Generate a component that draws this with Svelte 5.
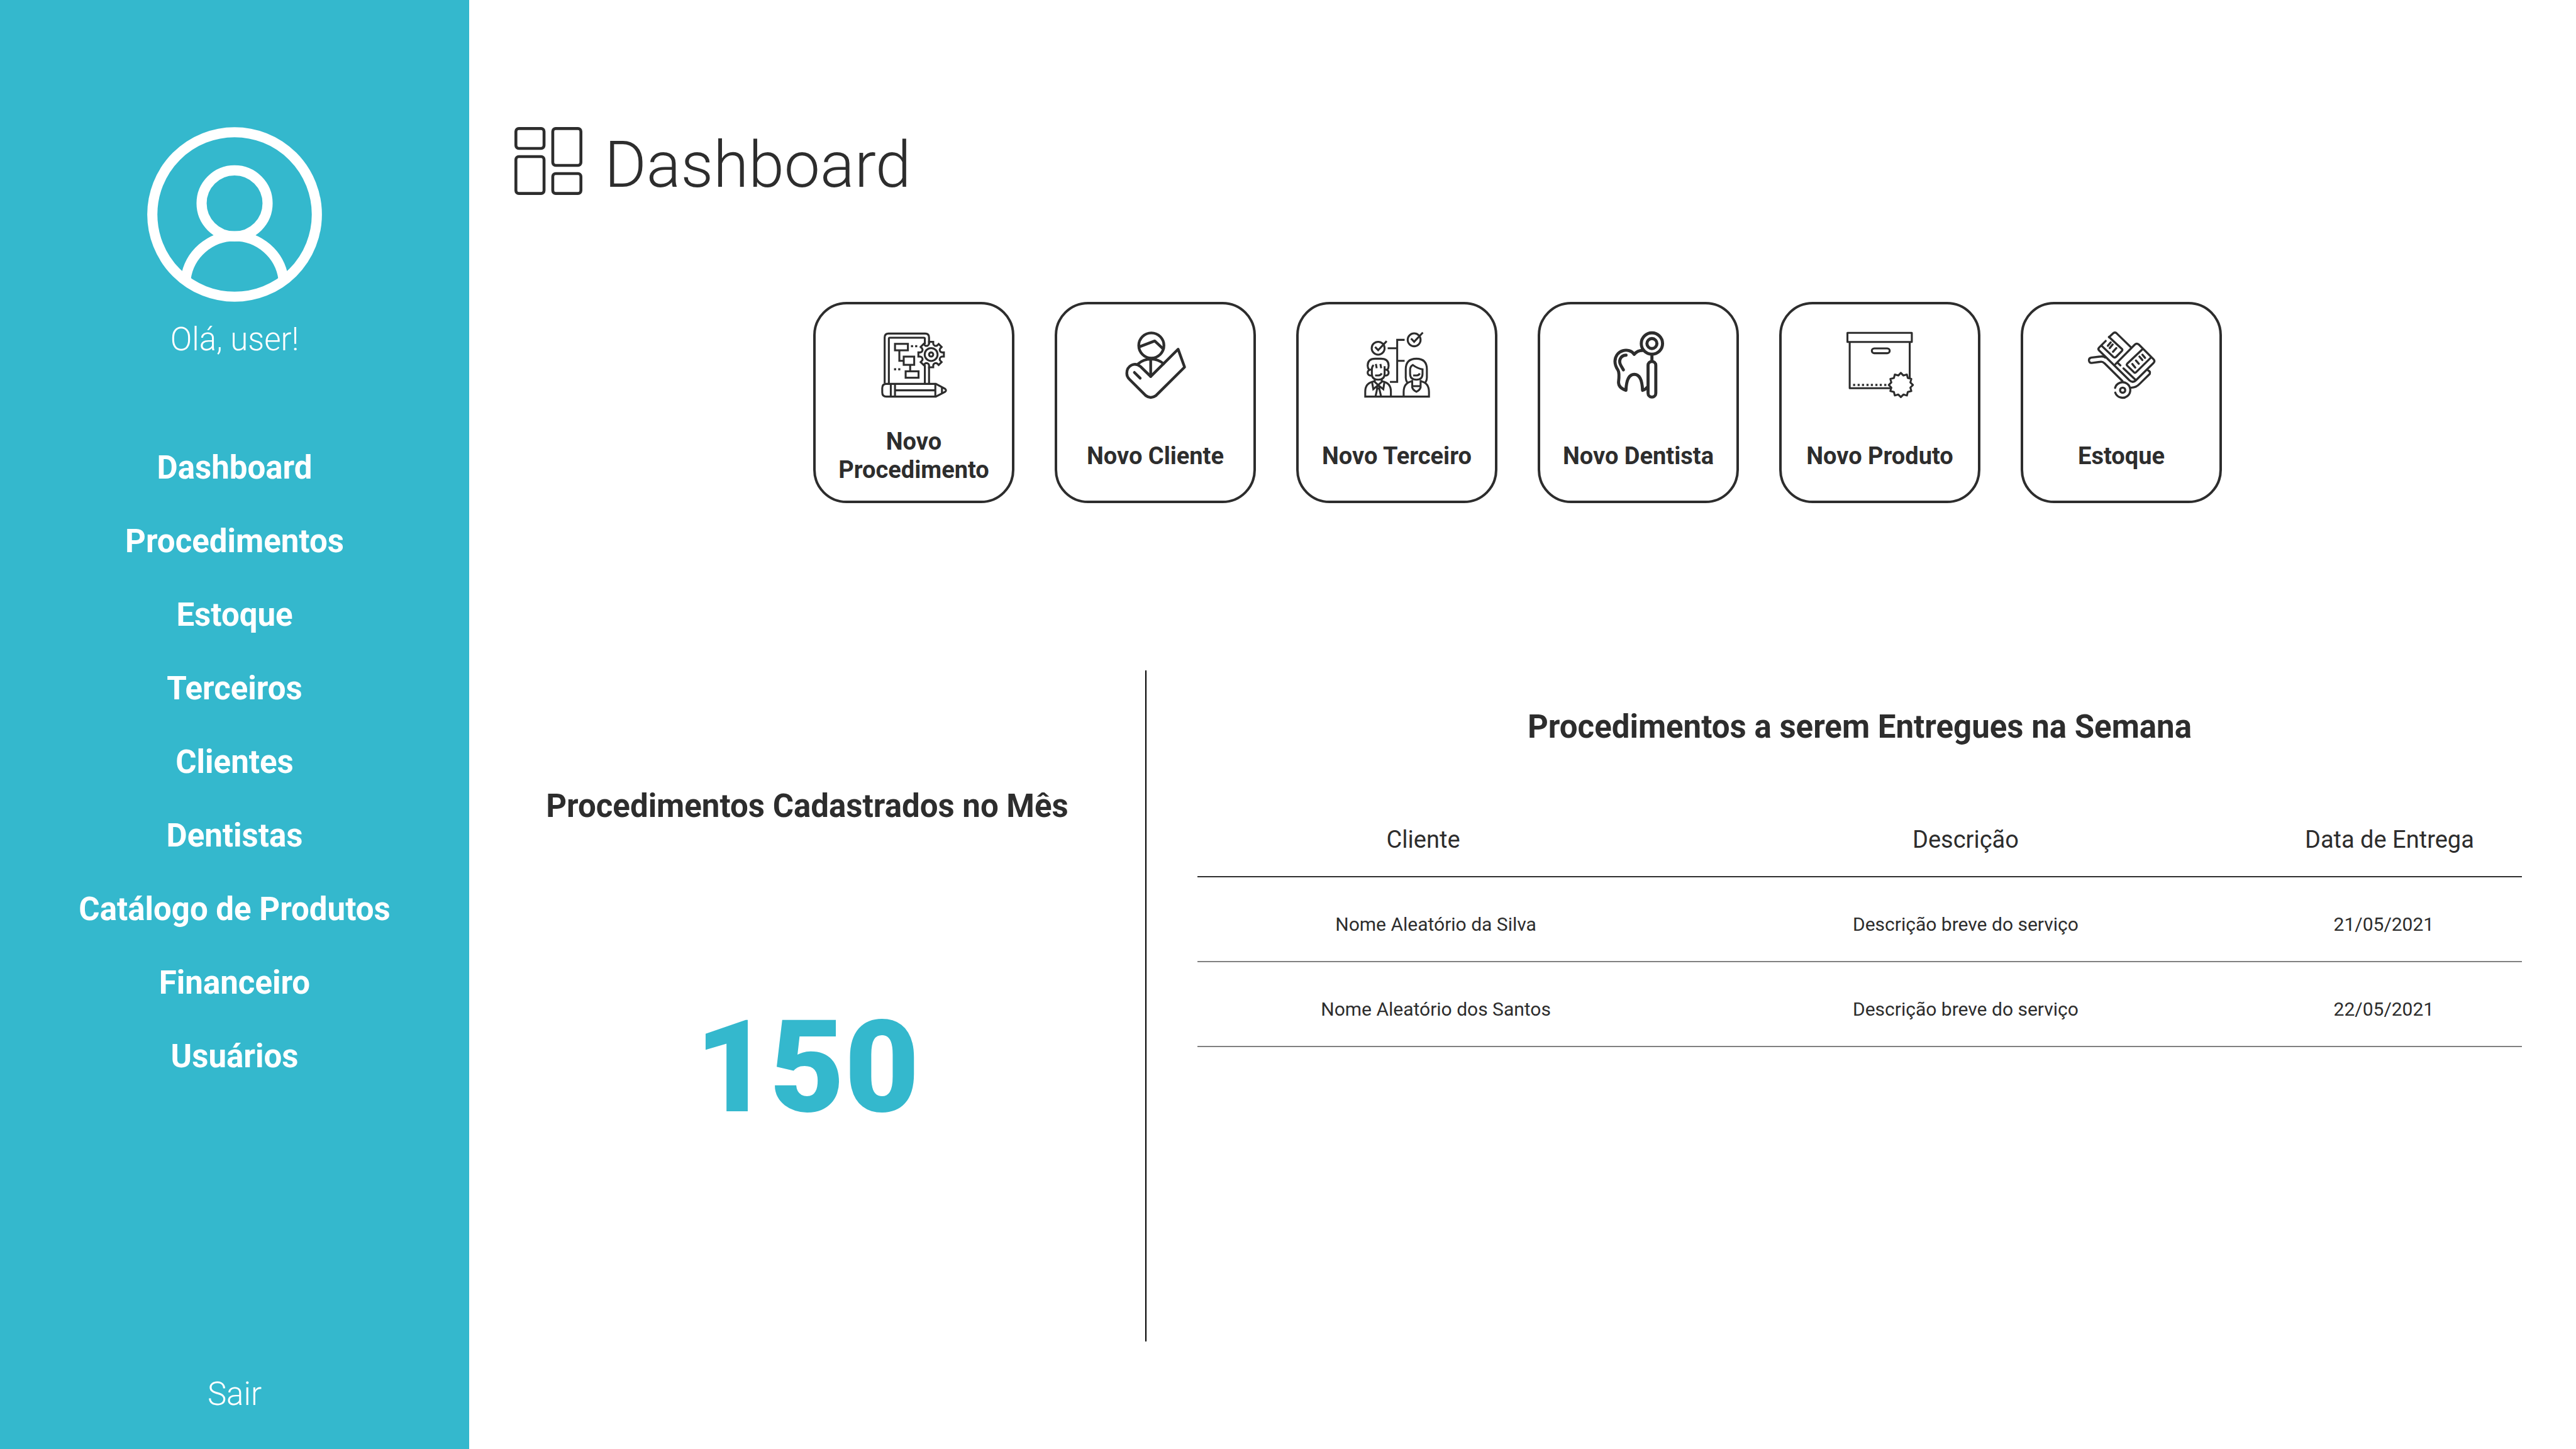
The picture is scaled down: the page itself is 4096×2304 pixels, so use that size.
<script>
  const menu = [
    'Dashboard',
    'Procedimentos',
    'Estoque',
    'Terceiros',
    'Clientes',
    'Dentistas',
    'Catálogo de Produtos',
    'Financeiro',
    'Usuários'
  ];

  const actions = [
    { icon: 'procedure', label: 'Novo Procedimento' },
    { icon: 'client', label: 'Novo Cliente' },
    { icon: 'partner', label: 'Novo Terceiro' },
    { icon: 'dentist', label: 'Novo Dentista' },
    { icon: 'product', label: 'Novo Produto' },
    { icon: 'stock', label: 'Estoque' }
  ];

  const deliveries = [
    { client: 'Nome Aleatório da Silva', description: 'Descrição breve do serviço', date: '21/05/2021' },
    { client: 'Nome Aleatório dos Santos', description: 'Descrição breve do serviço', date: '22/05/2021' }
  ];

  const monthlyTotal = 150;

  // Point (x, y) turned by the given angle around (cx, cy).
  function turn(cx, cy, x, y, degrees) {
    const a = (degrees * Math.PI) / 180;
    const px = cx + x * Math.cos(a) - y * Math.sin(a);
    const py = cy + x * Math.sin(a) + y * Math.cos(a);
    return `${px.toFixed(1)} ${py.toFixed(1)}`;
  }

  function gearPath(cx, cy) {
    let d = '';
    for (let i = 0; i < 8; i++) {
      const a = i * 45;
      const start = turn(cx, cy, -13, -66, a);
      d += i === 0 ? `M${start}` : `A16 16 0 0 0 ${start}`;
      d += `L${turn(cx, cy, -13, -79, a)}L${turn(cx, cy, 13, -79, a)}L${turn(cx, cy, 13, -66, a)}`;
    }
    return `${d}A16 16 0 0 0 ${turn(cx, cy, -13, -66, 0)}Z`;
  }

  function sealPath(cx, cy, outer, inner) {
    const points = [];
    for (let i = 0; i < 24; i++) {
      points.push(turn(cx, cy, 0, i % 2 ? -inner : -outer, i * 15));
    }
    return `M${points.join('L')}Z`;
  }

  const gear = gearPath(771, 371);
  const seal = sealPath(764, 560, 75, 61);
  const stitches = [468, 496, 523, 551, 578, 606, 633, 661];
</script>

<div class="page">
  <aside class="sidebar">
    <svg class="avatar" viewBox="75 69 1086 1086" aria-hidden="true">
      <circle cx="618" cy="612" r="511" />
      <circle cx="618" cy="543" r="205" />
      <path d="M315 1010A306 306 0 0 1 921 1010" />
    </svg>
    <p class="greeting">Olá, user!</p>
    <nav class="menu">
      {#each menu as item}
        <a href="#{item}">{item}</a>
      {/each}
    </nav>
    <a class="logout" href="#sair">Sair</a>
  </aside>

  <main class="main">
    <header class="heading">
      <svg class="heading-icon" viewBox="0 0 140 140" aria-hidden="true">
        <rect x="3" y="3" width="58" height="41" rx="6" />
        <rect x="79" y="3" width="58" height="76" rx="6" />
        <rect x="3" y="61" width="58" height="76" rx="6" />
        <rect x="79" y="96" width="58" height="41" rx="6" />
      </svg>
      <h1>Dashboard</h1>
    </header>

    <div class="actions">
      {#each actions as action}
        <button class="card" type="button">
          {#if action.icon === 'procedure'}
            <svg class="icon" viewBox="457 228 417 417" stroke-width="12" aria-hidden="true">
              <path d="M483 549V265Q483 241 507 241H734Q758 241 758 265V297M758 448V549" />
              <path d="M509 549V273Q509 267 515 267H726Q732 267 732 273V306M732 436V549" />
              <rect x="547" y="305" width="80" height="40" />
              <rect x="601" y="384" width="65" height="51" />
              <rect x="613" y="475" width="80" height="40" />
              <path d="M574 349V410H600M641 438V474" />
              <g class="solid">
                <rect x="646" y="313" width="13" height="13" />
                <rect x="672" y="313" width="13" height="13" />
                <rect x="541" y="456" width="13" height="13" />
                <rect x="567" y="456" width="13" height="13" />
              </g>
              <path class="paper" d={gear} />
              <path d="M732 306V300M758 297V306" />
              <circle cx="771" cy="371" r="40" />
              <circle cx="771" cy="371" r="13" />
              <path d="M494 553H800L858 584Q868 593 858 602L800 632H494Q468 632 468 606V579Q468 553 494 553Z" />
              <path d="M521 553V632M547 553V632M797 553V632M838 574V612M547 593H797" />
            </svg>
          {:else if action.icon === 'client'}
            <svg class="icon round" viewBox="427 228 417 417" stroke-width="17" aria-hidden="true">
              <circle cx="609" cy="315" r="78" />
              <path d="M538 322L630 287L682 336" />
              <path d="M528 428Q562 399 607 399Q650 399 685 428M605 399V507" />
              <path d="M605 507L542 446C505 414 457 440 457 488Q457 508 472 523L575 626Q605 648 637 626L815 449L775 338Z" />
              <path d="M504 482L540 518" />
            </svg>
          {:else if action.icon === 'partner'}
            <svg class="icon" viewBox="427 228 417 417" stroke-width="12" aria-hidden="true">
              <circle cx="518" cy="332" r="40" />
              <circle cx="741" cy="280" r="40" />
              <path d="M499 324L518 344L571 288M722 272L741 292L795 235" />
              <path d="M682 280H636V541H591M577 332H636M636 410H682" />
              <path d="M462 465Q453 455 453 440Q453 397 500 397H535Q583 397 583 440Q583 455 575 465" />
              <path d="M479 464Q453 465 453 484Q453 502 479 502M558 464Q583 465 583 484Q583 502 558 502" />
              <path d="M490 436Q479 445 479 465V490Q479 527 518 527Q558 527 558 490V443" />
              <path d="M504 430L509 456M532 430L537 456M499 501H520Q535 500 540 488" />
              <path d="M497 525V541L518 560L540 541V525" />
              <path d="M480 541L488 586L518 560L550 586L557 541" />
              <circle cx="518" cy="574" r="8" />
              <path d="M512 582L502 630M525 582L536 630" />
              <path d="M494 537Q438 547 438 600V632H833V603Q833 547 783 537M543 537Q597 547 597 600V632" />
              <path d="M676 632V603Q676 547 727 537" />
              <path d="M699 546Q689 530 689 515V463Q689 397 755 397Q820 397 820 463V515Q820 530 810 546" />
              <path d="M733 436Q716 445 716 465V490Q716 527 755 527Q793 527 793 490V463Q762 458 733 436Z" />
              <path d="M735 501H757Q770 500 776 488" />
              <path d="M729 529V575Q734 592 755 602Q776 592 781 575V529M729 567H781" />
            </svg>
          {:else if action.icon === 'dentist'}
            <svg class="icon round" viewBox="427 228 417 417" stroke-width="19" aria-hidden="true">
              <circle cx="718" cy="303" r="66" />
              <circle cx="718" cy="303" r="31" />
              <path d="M718 372V412" />
              <rect x="694" y="414" width="48" height="221" rx="24" />
              <path d="M690 573Q678 588 660 593Q656 494 609 494Q561 494 557 593Q511 578 511 543C515 510 517 484 508 468C494 448 489 432 489 413C492 340 578 325 608 370Q629 345 660 346" />
              <path d="M558 375C520 376 510 412 526 440L541 466" />
            </svg>
          {:else if action.icon === 'product'}
            <svg class="icon round" viewBox="427 228 417 417" stroke-width="12" aria-hidden="true">
              <rect x="433" y="237" width="399" height="56" />
              <path d="M447 296V580H764M819 296V560" />
              <rect x="584" y="333" width="111" height="30" rx="15" />
              <g class="solid">
                {#each stitches as x}
                  <rect {x} y="553" width="13" height="13" />
                {/each}
              </g>
              <path class="paper" d={seal} />
            </svg>
          {:else}
            <svg class="icon round" viewBox="427 228 417 417" stroke-width="13" aria-hidden="true">
              <path d="M557 264L584 239Q594 231 604 239L694 327" />
              <path d="M557 262L637 336Q643 342 637 349L602 385Q593 394 584 386L513 318" />
              <path d="M537 287L496 328Q487 337 496 346L684 531Q706 550 725 530L833 424Q845 412 833 400L742 309Q729 298 717 310L598 430" />
              <path d="M535 390Q522 380 500 384L447 390Q432 393 433 408Q436 424 450 423L505 416Q517 414 530 426L641 536" />
              <path d="M612 424L628 438M647 457L722 528" />
              <path d="M765 338L670 428Q664 434 671 441L712 481Q719 487 726 480L815 392" />
              <path d="M800 470Q815 475 810 491L746 554Q724 577 695 576" />
              <path d="M550 317L568 296M562 331L580 309M582 354L603 331" />
              <path d="M702 430L720 452M724 408L742 428M746 384L764 405M764 372L781 392" />
              <path d="M595 578A48 48 0 1 1 596 607" />
              <circle cx="642" cy="592" r="16" />
            </svg>
          {/if}
          <span class="card-label">{action.label}</span>
        </button>
      {/each}
    </div>

    <div class="panels">
      <section class="panel summary">
        <h2>Procedimentos Cadastrados no Mês</h2>
        <p class="total">{monthlyTotal}</p>
      </section>

      <section class="panel schedule">
        <h2>Procedimentos a serem Entregues na Semana</h2>
        <table>
          <thead>
            <tr>
              <th class="client" scope="col">Cliente</th>
              <th class="description" scope="col">Descrição</th>
              <th scope="col">Data de Entrega</th>
            </tr>
          </thead>
          <tbody>
            {#each deliveries as row}
              <tr>
                <td>{row.client}</td>
                <td>{row.description}</td>
                <td class="due">{row.date}</td>
              </tr>
            {/each}
          </tbody>
        </table>
      </section>
    </div>
  </main>
</div>

<style>
  :global(body) {
    margin: 0;
    background: #fff;
  }

  .page {
    display: flex;
    min-height: 100vh;
    color: #2d2d2d;
    font-family: Roboto, 'Liberation Sans', sans-serif;
    font-size: 51px;
    line-height: 60px;
  }

  h1,
  h2,
  p {
    margin: 0;
  }

  a {
    color: inherit;
    text-decoration: none;
  }

  .sidebar {
    box-sizing: border-box;
    flex: none;
    display: flex;
    flex-direction: column;
    align-items: center;
    width: 746px;
    padding: 202px 24px 57px;
    background: #34b8cd;
    color: #fff;
  }

  .avatar {
    width: 278px;
    height: 278px;
    fill: none;
    stroke: currentColor;
    stroke-width: 63px;
  }

  .greeting {
    margin-top: 30px;
    font-weight: 300;
  }

  .menu {
    display: flex;
    flex-direction: column;
    align-items: center;
    gap: 57px;
    margin: 144px 0 57px;
    font-weight: 700;
  }

  .logout {
    margin-top: auto;
    font-weight: 300;
  }

  .main {
    box-sizing: border-box;
    flex: 1;
    min-width: 0;
    display: flex;
    flex-direction: column;
    padding: 202px 0 171px;
  }

  .heading {
    display: flex;
    align-items: flex-start;
    gap: 35px;
    padding: 0 88px 0 72px;
  }

  .heading-icon {
    width: 108px;
    height: 108px;
    fill: none;
    stroke: currentColor;
    stroke-width: 6px;
  }

  h1 {
    font-size: 102px;
    line-height: 120px;
    font-weight: 300;
  }

  .actions {
    display: flex;
    flex-wrap: wrap;
    justify-content: center;
    gap: 64px;
    margin: 158px 0 266px;
    padding: 0 88px 0 72px;
  }

  .card {
    box-sizing: border-box;
    display: flex;
    flex-direction: column;
    align-items: center;
    gap: 46px;
    width: 320px;
    min-height: 320px;
    padding: 43px 8px 26px;
    border: 4px solid #2d2d2d;
    border-radius: 53px;
    background: #fff;
    color: inherit;
    font-family: inherit;
    font-size: 38px;
    line-height: 45px;
    font-weight: 700;
    cursor: pointer;
  }

  .icon {
    flex: none;
    width: 107px;
    height: 107px;
    overflow: visible;
    fill: none;
    stroke: currentColor;
  }

  .icon.round {
    stroke-linecap: round;
    stroke-linejoin: round;
  }

  .solid {
    fill: currentColor;
    stroke: none;
  }

  .paper {
    fill: #fff;
  }

  .card-label {
    flex: 1;
    display: flex;
    align-items: center;
    text-align: center;
  }

  .panels {
    flex: 1;
    display: flex;
  }

  .panel {
    box-sizing: border-box;
    display: flex;
    flex-direction: column;
    align-items: center;
  }

  h2 {
    font-size: 51px;
    line-height: 60px;
    font-weight: 700;
    text-align: center;
  }

  .summary {
    width: 32.15%;
    padding-top: 186px;
    gap: 265px;
    border-right: 2px solid #000;
  }

  .total {
    color: #34b8cd;
    font-size: 205px;
    line-height: 240px;
    font-weight: 900;
  }

  .schedule {
    flex: 1;
    padding: 60px 86px 0 81px;
    gap: 127px;
  }

  table {
    width: 100%;
    table-layout: fixed;
    border-collapse: separate;
    border-spacing: 0;
    text-align: center;
  }

  th {
    padding: 0 0 35px;
    border-bottom: 2px solid #2d2d2d;
    font-size: 38px;
    line-height: 45px;
    font-weight: 400;
  }

  th.client {
    box-sizing: border-box;
    width: 36%;
    padding-right: 40px;
  }

  th.description {
    width: 44%;
  }

  td {
    padding: 57px 0 40px;
    border-bottom: 2px solid #808080;
    font-size: 30px;
    line-height: 36px;
  }

  td.due {
    padding-right: 18px;
  }
</style>
